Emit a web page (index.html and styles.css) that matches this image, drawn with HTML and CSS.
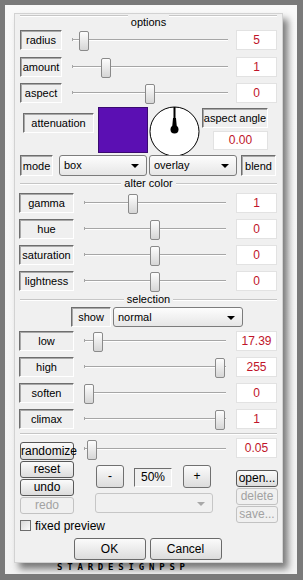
FILE: index.html
```html
<!DOCTYPE html>
<html lang="en">

<head>
    <meta charset="UTF-8">
    <meta name="viewport" content="width=device-width, initial-scale=1.0">
    <link rel="stylesheet" href="styles.css">
</head>

<body>

    <div id="frame">
        <div id="panel">

            <div class="legend top"><span>options</span></div>

            <div class="row first">
                <div class="label">radius</div>
                <div class="slider"><div class="thumb" style="left: 7px"></div></div>
                <div class="value">5</div>
            </div>
            <div class="row half">
                <div class="label">amount</div>
                <div class="slider"><div class="thumb" style="left: 29px"></div></div>
                <div class="value">1</div>
            </div>
            <div class="row half">
                <div class="label">aspect</div>
                <div class="slider"><div class="thumb" style="left: 73px"></div></div>
                <div class="value">0</div>
            </div>

            <div id="atten">
                <div class="label wide">attenuation</div>
                <div id="swatch"></div>
                <svg id="dial" width="51" height="51" viewBox="0 0 51 51">
                    <circle cx="25.5" cy="25.5" r="24.5" fill="#fff" stroke="#000" stroke-width="1" />
                    <line x1="25.5" y1="1" x2="25.5" y2="14" stroke="#000" stroke-width="2" />
                    <polygon points="24,12 27,12 28,23 23,23" fill="#000" />
                    <circle cx="25.5" cy="23.5" r="4" fill="#000" />
                </svg>
                <div id="angle">
                    <div class="label angle-label">aspect angle</div>
                    <div class="value angle-value">0.00</div>
                </div>
            </div>

            <div class="row mode">
                <div class="label mode-label">mode</div>
                <div class="select box-select">box</div>
                <div class="select overlay-select">overlay</div>
                <div class="label blend-label">blend</div>
            </div>

            <div class="legend alter"><span>alter color</span></div>

            <div class="row alt first-alt">
                <div class="label">gamma</div>
                <div class="slider"><div class="thumb" style="left: 44px"></div></div>
                <div class="value">1</div>
            </div>
            <div class="row alt">
                <div class="label">hue</div>
                <div class="slider"><div class="thumb" style="left: 66px"></div></div>
                <div class="value">0</div>
            </div>
            <div class="row alt">
                <div class="label">saturation</div>
                <div class="slider"><div class="thumb" style="left: 66px"></div></div>
                <div class="value">0</div>
            </div>
            <div class="row alt">
                <div class="label">lightness</div>
                <div class="slider"><div class="thumb" style="left: 66px"></div></div>
                <div class="value">0</div>
            </div>

            <div class="legend selection"><span>selection</span></div>

            <div class="row show-row">
                <div class="label show-label">show</div>
                <div class="select normal-select">normal</div>
            </div>

            <div class="row alt first-sel">
                <div class="label">low</div>
                <div class="slider"><div class="thumb" style="left: 9px"></div></div>
                <div class="value">17.39</div>
            </div>
            <div class="row alt">
                <div class="label">high</div>
                <div class="slider"><div class="thumb" style="left: 131px"></div></div>
                <div class="value">255</div>
            </div>
            <div class="row alt">
                <div class="label">soften</div>
                <div class="slider"><div class="thumb" style="left: 0px"></div></div>
                <div class="value">0</div>
            </div>
            <div class="row alt">
                <div class="label">climax</div>
                <div class="slider"><div class="thumb" style="left: 131px"></div></div>
                <div class="value">1</div>
            </div>

            <div class="sep"></div>

            <div id="random-row">
                <div class="btn random-btn">randomize</div>
                <div class="slider random-slider"><div class="thumb" style="left: 3px"></div></div>
                <div class="value">0.05</div>
            </div>

            <div id="lower">
                <div class="col-left">
                    <div class="btn small">reset</div>
                    <div class="btn small">undo</div>
                    <div class="btn small off">redo</div>
                    <div class="check-row">
                        <span class="check"></span>fixed preview
                    </div>
                </div>
                <div class="col-mid">
                    <div class="zoom-row">
                        <div class="btn square minus">-</div>
                        <div class="zoom-value">50%</div>
                        <div class="btn square plus">+</div>
                    </div>
                    <div class="select off preset-select"></div>
                </div>
                <div class="col-right">
                    <div class="btn small open">open...</div>
                    <div class="btn small off">delete</div>
                    <div class="btn small off">save...</div>
                </div>
            </div>

            <div id="ok-row">
                <div class="btn big">OK</div>
                <div class="btn big">Cancel</div>
            </div>

        </div>
        <div id="sign">STARDESIGNPSP</div>
    </div>

</body>

</html>
```

FILE: styles.css
```css
* {
    margin: 0;
    padding: 0;
}

body {
    margin: 0;
    background: #7a7a7a;
    font-family: "Liberation Sans", Arial, sans-serif;
    font-size: 11px;
    color: #000;
}

#frame {
    box-sizing: border-box;
    width: 292px;
    height: 569px;
    margin: 5px 0 0 5px;
    padding: 8px 0 0 9px;
    background: linear-gradient(#f9f9f9, #f3f3f3);
}

#panel {
    box-sizing: border-box;
    width: 269px;
    height: 550px;
    padding: 0 5px;
    background: #f0f0f0;
    border: 1px solid #d2d2d2;
    box-shadow: 5px 6px 7px rgba(0, 0, 0, 0.5);
}

/* group titles */
.legend {
    display: flex;
    align-items: center;
    height: 13px;
    line-height: 13px;
}

.legend::before,
.legend::after {
    content: "";
    flex: 1;
    border-top: 1px solid #c6c6c6;
    border-bottom: 1px solid #fff;
}

.legend span {
    padding: 0 3px;
}

.legend.top {
    height: 14px;
    align-items: flex-start;
}

.legend.top::before,
.legend.top::after {
    margin-top: 1px;
}

.legend.top span {
    line-height: 15px;
    padding-top: 1px;
}

.legend.alter {
    margin-top: 1px;
}

.legend.selection {
    margin-top: 2px;
}

/* rows */
.row {
    display: flex;
    align-items: center;
    height: 20px;
    margin-top: 6px;
}

.row.first {
    margin-top: 2px;
}

.row.half {
    margin-top: 6.5px;
}

.label {
    box-sizing: border-box;
    width: 42px;
    height: 20px;
    display: flex;
    align-items: center;
    justify-content: center;
    white-space: nowrap;
    background: #efefef;
    border-top: 1px solid #6e6e6e;
    border-left: 1px solid #6e6e6e;
    border-right: 1px solid #fff;
    border-bottom: 1px solid #fff;
    box-shadow: inset 1px 1px #a8a8a8;
}

.slider {
    position: relative;
    width: 156px;
    height: 20px;
    margin-left: 10px;
}

.slider::before {
    content: "";
    position: absolute;
    left: 0;
    right: 0;
    top: 9px;
    border-top: 1px solid #a6a6a6;
    border-bottom: 1px solid #fff;
}

.slider::after {
    content: "";
    position: absolute;
    left: 0;
    top: 8px;
    width: 1px;
    height: 3px;
    background: #a6a6a6;
}

.thumb {
    position: absolute;
    top: 1px;
    box-sizing: border-box;
    width: 10px;
    height: 20px;
    border: 1px solid #8a8a8a;
    border-radius: 2px;
    background: linear-gradient(#fdfdfd, #d6d6d6);
    z-index: 1;
}

.value {
    box-sizing: border-box;
    width: 41px;
    height: 20px;
    margin-left: auto;
    background: #fff;
    border: 1px solid #e2e2e2;
    color: #c0142a;
    font-size: 12px;
    line-height: 18px;
    text-align: center;
}

.row.alt .label {
    width: 55px;
    margin-left: -1px;
}

.row.alt .slider {
    width: 142px;
}

.row.first-alt {
    margin-top: 3px;
}

.row.first-sel {
    margin-top: 4px;
}

/* attenuation block */
#atten {
    display: flex;
    align-items: flex-start;
    height: 49px;
    margin-top: 3px;
}

.label.wide {
    width: 71px;
    margin: 7px 0 0 3px;
}

#swatch {
    box-sizing: border-box;
    width: 50px;
    height: 46px;
    margin: 1px 0 0 4px;
    background: #5b0fb3;
    border: 1px solid #3a0a70;
}

#dial {
    display: block;
    margin-left: 1px;
}

#angle {
    margin-left: 2px;
}

.angle-label {
    width: 66px;
    margin-top: 2px;
}

.angle-value {
    width: 55px;
    height: 19px;
    margin-top: 3px;
    line-height: 17px;
}

/* mode row */
.row.mode {
    height: 21px;
    margin-top: 0;
}

.mode-label {
    width: 33px;
    height: 21px;
}

.blend-label {
    width: 35px;
    height: 21px;
    margin-left: 4px;
}

.select {
    position: relative;
    box-sizing: border-box;
    height: 21px;
    padding-left: 4px;
    line-height: 19px;
    border: 1px solid #7c7c7c;
    border-radius: 3px;
    background: linear-gradient(#fdfdfd, #e6e6e6);
}

.select::after {
    content: "";
    position: absolute;
    right: 7px;
    top: 8px;
    border-left: 4px solid transparent;
    border-right: 4px solid transparent;
    border-top: 4px solid #000;
}

.box-select {
    width: 88px;
    margin-left: 6px;
}

.overlay-select {
    width: 88px;
    margin-left: 2px;
}

/* selection */
.row.show-row {
    margin-top: 1px;
}

.show-label {
    width: 40px;
    margin-left: 51px;
}

.normal-select {
    width: 130px;
    height: 20px;
    margin-left: 2px;
    line-height: 18px;
}

.sep {
    margin-top: 4px;
    border-top: 1px solid #c6c6c6;
    border-bottom: 1px solid #fff;
}

/* bottom controls */
.btn {
    box-sizing: border-box;
    border: 1px solid #585858;
    border-radius: 3px;
    background: linear-gradient(#fbfbfb, #dcdcdc);
    text-align: center;
    white-space: nowrap;
    font-size: 12px;
}

.btn.off {
    border-color: #c2c2c2;
    color: #a2a2a2;
    background: #f0f0f0;
}

#random-row {
    display: flex;
    align-items: flex-start;
    height: 22px;
    margin-top: 3px;
}

.random-btn {
    width: 54px;
    height: 18px;
    margin-top: 4px;
    line-height: 16px;
}

.random-slider {
    width: 142px;
    margin-top: 1px;
}

#lower {
    display: flex;
    align-items: flex-start;
    height: 70px;
}

.col-left {
    width: 54px;
}

.btn.small {
    height: 17px;
    line-height: 15px;
}

.col-left .btn {
    margin-top: 1px;
}

.col-left .btn + .btn {
    margin-top: 1px;
}

.check-row {
    display: flex;
    align-items: center;
    height: 11px;
    margin-top: 6px;
    white-space: nowrap;
    font-size: 12px;
}

.check {
    flex: none;
    box-sizing: border-box;
    width: 11px;
    height: 11px;
    margin-right: 4px;
    border: 1px solid #6c6c6c;
    background: linear-gradient(135deg, #d8d8d8, #fbfbfb);
}

.col-mid {
    width: 118px;
    margin-left: 21px;
}

.zoom-row {
    display: flex;
    align-items: flex-start;
    height: 23px;
    margin-top: 5px;
}

.btn.square {
    width: 28px;
    height: 23px;
    line-height: 20px;
    border-color: #707070;
}

.minus {
    margin-left: 1px;
}

.plus {
    margin-left: 11px;
}

.zoom-value {
    box-sizing: border-box;
    width: 38px;
    height: 19px;
    margin: 3px 0 0 10px;
    font-size: 12px;
    line-height: 17px;
    text-align: center;
    border-top: 1px solid #6e6e6e;
    border-left: 1px solid #6e6e6e;
    border-right: 1px solid #fff;
    border-bottom: 1px solid #fff;
}

.preset-select {
    width: 118px;
    height: 20px;
    margin-top: 5px;
    border-color: #c6c6c6;
    background: #f0f0f0;
}

.preset-select::after {
    border-top-color: #a8a8a8;
}

.col-right {
    width: 42px;
    margin-left: auto;
    margin-right: -1px;
}

.open {
    margin-top: 10px;
}

.col-right .btn + .btn {
    margin-top: 1px;
}

#ok-row {
    display: flex;
    justify-content: center;
    gap: 4px;
    margin-top: 8px;
    padding-right: 2px;
}

.btn.big {
    width: 72px;
    height: 22px;
    line-height: 20px;
    border-color: #6a6a6a;
}

#sign {
    margin-left: 43px;
    font-family: "DejaVu Sans Mono", monospace;
    font-weight: bold;
    font-size: 9px;
    line-height: 8px;
    letter-spacing: 4.8px;
}
```
